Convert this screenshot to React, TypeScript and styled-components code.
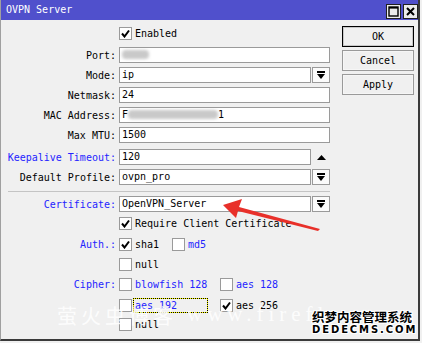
import React from "react";
import styled, { createGlobalStyle } from "styled-components";

const mono = `"DejaVu Sans Mono", "Liberation Mono", monospace`;

const GlobalStyle = createGlobalStyle`
  html, body { margin: 0; padding: 0; background: #f0f0f0; }
  body { font-family: ${mono}; }
`;

const Window = styled.div`
  position: relative;
  width: 420px;
  height: 341px;
  box-sizing: border-box;
  border-left: 1px solid #a0a0a0;
  border-right: 2px solid #3a3a3a;
  border-bottom: 2px solid #3a3a3a;
  background: #f0f0f0;
  display: flex;
  flex-direction: column;
  overflow: hidden;
  font-family: ${mono};
  font-size: 10px;
  color: #000;
`;

const TitleBar = styled.div`
  height: 20px;
  flex: none;
  background: #5050cc;
  color: #fff;
  display: flex;
  align-items: center;
  justify-content: space-between;
  padding: 0 0 0 5px;
`;

const TitleText = styled.span`
  font-size: 10px;
  line-height: 12px;
`;

const TitleButtons = styled.div`
  display: flex;
  gap: 2px;
  padding-top: 2px;
`;

const TitleButton = styled.div`
  width: 15px;
  height: 15px;
  box-sizing: border-box;
  border: 1px solid #202020;
  background: #ececec;
  display: flex;
  align-items: center;
  justify-content: center;
`;

const Body = styled.div`
  display: flex;
  align-items: flex-start;
  padding-top: 6px;
`;

const Form = styled.div`
  width: 329px;
  display: flex;
  flex-direction: column;
`;

const Row = styled.div<{ $mt: number; $h: number }>`
  display: grid;
  grid-template-columns: 115px 211px;
  column-gap: 3px;
  align-items: center;
  height: ${(p) => p.$h}px;
  margin-top: ${(p) => p.$mt}px;
`;

const Label = styled.div<{ $blue?: boolean }>`
  text-align: right;
  white-space: nowrap;
  color: ${(p) => (p.$blue ? "#2424ff" : "#000")};
`;

const Field = styled.div`
  height: 16px;
  box-sizing: border-box;
  border: 1px solid #9a9a9a;
  background: #fff;
  padding: 0 2px;
  line-height: 14px;
  white-space: nowrap;
  overflow: hidden;
`;

const Combo = styled.div`
  display: grid;
  grid-template-columns: 192px 18px;
  column-gap: 1px;
  align-items: center;
`;

const DropButton = styled.div`
  height: 16px;
  box-sizing: border-box;
  border: 1px solid #9a9a9a;
  background: #fbfbfb;
  display: flex;
  align-items: center;
  justify-content: center;
`;

const SpinSlot = styled.div`
  height: 16px;
  display: flex;
  align-items: center;
  justify-content: center;
`;

const Blur = styled.span<{ $w: number }>`
  display: inline-block;
  width: ${(p) => p.$w}px;
  height: 9px;
  vertical-align: -1px;
  background: #c9c9c9;
  border-radius: 4px;
  filter: blur(1.5px);
`;

const Options = styled.div`
  display: flex;
  align-items: center;
`;

const Option = styled.div<{ $w?: number }>`
  display: flex;
  align-items: center;
  gap: 3px;
  width: ${(p) => (p.$w ? `${p.$w}px` : "auto")};
`;

const Box = styled.div`
  width: 13px;
  height: 13px;
  flex: none;
  box-sizing: border-box;
  border: 1px solid #9a9a9a;
  background: #fff;
  display: flex;
  align-items: center;
  justify-content: center;
`;

const OptText = styled.span<{ $blue?: boolean }>`
  line-height: 13px;
  white-space: nowrap;
  color: ${(p) => (p.$blue ? "#2424ff" : "#000")};
`;

const FocusText = styled.span`
  box-sizing: border-box;
  width: 75px;
  height: 15px;
  margin-left: -2px;
  padding-left: 1px;
  line-height: 13px;
  color: #2424ff;
  border: 1px dotted #000;
  background: #ffff00;
  box-shadow: inset 0 0 0 40px #f0f0f0;
`;

const Separator = styled.div`
  margin-top: 6px;
  margin-left: 7px;
  width: 322px;
  height: 1px;
  background: #c4c4c4;
`;

const ButtonCol = styled.div`
  margin-left: 12px;
  width: 72px;
  display: flex;
  flex-direction: column;
  gap: 3px;
`;

const Button = styled.div<{ $default?: boolean }>`
  height: 21px;
  box-sizing: border-box;
  border: 1px solid ${(p) => (p.$default ? "#000" : "#9a9a9a")};
  box-shadow: inset 0 0 0 1px ${(p) => (p.$default ? "#c8c8c8" : "#f6f6f6")};
  background: #f0f0f0;
  display: flex;
  align-items: center;
  justify-content: center;
  font-size: 10px;
`;

const WatermarkCn = styled.div`
  position: absolute;
  left: 56px;
  top: 301px;
  font-family: "Noto Sans CJK SC", sans-serif;
  font-size: 20px;
  letter-spacing: 4px;
  color: rgba(255, 255, 255, 0.85);
  pointer-events: none;
`;

const WatermarkUrl = styled.div`
  position: absolute;
  left: 186px;
  top: 302px;
  font-family: "Liberation Serif", serif;
  font-size: 21px;
  letter-spacing: 5px;
  color: rgba(255, 255, 255, 0.85);
  pointer-events: none;
`;

const Dede = styled.div`
  position: absolute;
  left: 311px;
  top: 309px;
  display: flex;
  flex-direction: column;
  align-items: flex-start;
  color: #000;
  pointer-events: none;
  text-shadow: 1px 0 0 #fff, -1px 0 0 #fff, 0 1px 0 #fff, 0 -1px 0 #fff,
    1px 1px 0 #fff, -1px -1px 0 #fff, 1px -1px 0 #fff, -1px 1px 0 #fff;
`;

const DedeCn = styled.span`
  font-family: "Noto Sans CJK SC", sans-serif;
  font-weight: 700;
  font-size: 12.5px;
  line-height: 15px;
`;

const DedeEn = styled.span`
  font-family: "DejaVu Sans", sans-serif;
  font-weight: 700;
  font-size: 10px;
  line-height: 12px;
  letter-spacing: 1.9px;
`;

const ArrowSvg = styled.svg`
  position: absolute;
  left: 221px;
  top: 197px;
  pointer-events: none;
`;

const Check = () => (
  <svg width="9" height="9" viewBox="0 0 9 9">
    <path d="M1 4.5 L3.5 7.5 L8 1.5" fill="none" stroke="#000" strokeWidth="2" />
  </svg>
);

const DropIcon = () => (
  <svg width="8" height="8" viewBox="0 0 8 8">
    <rect x="0" y="0" width="8" height="2" fill="#000" />
    <polygon points="0,3 8,3 4,8" fill="#000" />
  </svg>
);

const UpIcon = () => (
  <svg width="9" height="5" viewBox="0 0 9 5">
    <polygon points="0,5 9,5 4.5,0" fill="#000" />
  </svg>
);

const CheckBox = ({ checked }: { checked?: boolean }) => <Box>{checked && <Check />}</Box>;

export default function App() {
  return (
    <>
      <GlobalStyle />
      <Window>
        <TitleBar>
          <TitleText>OVPN Server</TitleText>
          <TitleButtons>
            <TitleButton>
              <svg width="11" height="11" viewBox="0 0 11 11">
                <rect x="1" y="1" width="9" height="9" fill="none" stroke="#000" strokeWidth="1.4" />
                <rect x="1" y="1" width="9" height="1.6" fill="#000" />
              </svg>
            </TitleButton>
            <TitleButton>
              <svg width="9" height="9" viewBox="0 0 9 9">
                <path d="M1 1 L8 8 M8 1 L1 8" stroke="#000" strokeWidth="2" />
              </svg>
            </TitleButton>
          </TitleButtons>
        </TitleBar>
        <Body>
          <Form>
            <Row $mt={1} $h={13}>
              <Label />
              <Options>
                <Option>
                  <CheckBox checked />
                  <OptText>Enabled</OptText>
                </Option>
              </Options>
            </Row>
            <Row $mt={7} $h={16}>
              <Label>Port:</Label>
              <Field>
                <Blur $w={27} />
              </Field>
            </Row>
            <Row $mt={4} $h={16}>
              <Label>Mode:</Label>
              <Combo>
                <Field>ip</Field>
                <DropButton>
                  <DropIcon />
                </DropButton>
              </Combo>
            </Row>
            <Row $mt={4} $h={16}>
              <Label>Netmask:</Label>
              <Field>24</Field>
            </Row>
            <Row $mt={4} $h={16}>
              <Label>MAC Address:</Label>
              <Field>
                F<Blur $w={90} />1
              </Field>
            </Row>
            <Row $mt={4} $h={16}>
              <Label>Max MTU:</Label>
              <Field>1500</Field>
            </Row>
            <Row $mt={6} $h={16}>
              <Label $blue>Keepalive Timeout:</Label>
              <Combo>
                <Field>120</Field>
                <SpinSlot>
                  <UpIcon />
                </SpinSlot>
              </Combo>
            </Row>
            <Row $mt={4} $h={16}>
              <Label>Default Profile:</Label>
              <Combo>
                <Field>ovpn_pro</Field>
                <DropButton>
                  <DropIcon />
                </DropButton>
              </Combo>
            </Row>
            <Separator />
            <Row $mt={4} $h={16}>
              <Label $blue>Certificate:</Label>
              <Combo>
                <Field>OpenVPN_Server</Field>
                <DropButton>
                  <DropIcon />
                </DropButton>
              </Combo>
            </Row>
            <Row $mt={5} $h={13}>
              <Label />
              <Options>
                <Option>
                  <CheckBox checked />
                  <OptText>Require Client Certificate</OptText>
                </Option>
              </Options>
            </Row>
            <Row $mt={8} $h={13}>
              <Label $blue>Auth.:</Label>
              <Options>
                <Option $w={53}>
                  <CheckBox checked />
                  <OptText>sha1</OptText>
                </Option>
                <Option>
                  <CheckBox />
                  <OptText $blue>md5</OptText>
                </Option>
              </Options>
            </Row>
            <Row $mt={7} $h={13}>
              <Label />
              <Options>
                <Option>
                  <CheckBox />
                  <OptText>null</OptText>
                </Option>
              </Options>
            </Row>
            <Row $mt={7} $h={13}>
              <Label $blue>Cipher:</Label>
              <Options>
                <Option $w={101}>
                  <CheckBox />
                  <OptText $blue>blowfish 128</OptText>
                </Option>
                <Option>
                  <CheckBox />
                  <OptText $blue>aes 128</OptText>
                </Option>
              </Options>
            </Row>
            <Row $mt={7} $h={13}>
              <Label />
              <Options>
                <Option $w={101}>
                  <CheckBox />
                  <FocusText>aes 192</FocusText>
                </Option>
                <Option>
                  <CheckBox checked />
                  <OptText>aes 256</OptText>
                </Option>
              </Options>
            </Row>
            <Row $mt={7} $h={13}>
              <Label />
              <Options>
                <Option>
                  <CheckBox />
                  <OptText>null</OptText>
                </Option>
              </Options>
            </Row>
          </Form>
          <ButtonCol>
            <Button $default>OK</Button>
            <Button>Cancel</Button>
            <Button>Apply</Button>
          </ButtonCol>
        </Body>
        <WatermarkCn>萤火虫博客</WatermarkCn>
        <WatermarkUrl>www.firefl</WatermarkUrl>
        <Dede>
          <DedeCn>织梦内容管理系统</DedeCn>
          <DedeEn>DEDECMS.COM</DedeEn>
        </Dede>
        <ArrowSvg width="100" height="36" viewBox="0 0 100 36">
          <polygon points="1,8 20,2 17,10 98,32 96,34 16,14 14,21" fill="#e8302a" />
        </ArrowSvg>
      </Window>
    </>
  );
}
